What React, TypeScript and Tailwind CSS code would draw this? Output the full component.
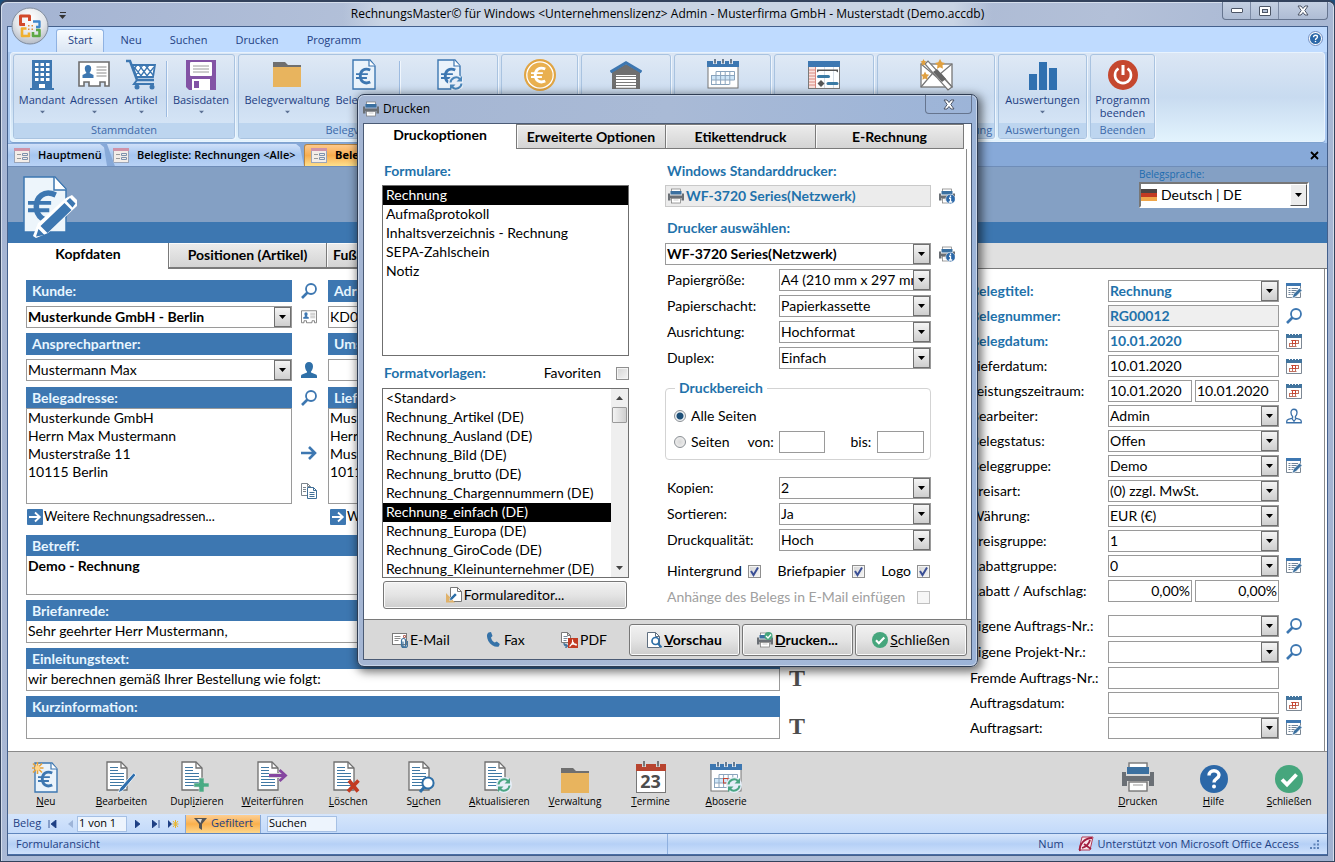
import React, { useId } from "react";

const SEGOE = "font-['Open_Sans','Noto_Sans',sans-serif]";
const BLUE = "#3d77b1";

type IconProps = { className?: string };

/* ---------- icon building blocks ---------- */

function Svg({ w, h, vb, children }: { w: number; h: number; vb?: string; children: React.ReactNode }) {
  return (
    <svg width={w} height={h} viewBox={vb ?? `0 0 ${w} ${h}`} fill="none" className="block shrink-0" aria-hidden="true">
      {children}
    </svg>
  );
}

function EuroSign({ x, y, s, color, sw }: { x: number; y: number; s: number; color: string; sw: number }) {
  return (
    <g transform={`translate(${x} ${y}) scale(${s})`} stroke={color} strokeWidth={sw}>
      <path d="M15 3.2C8.5.2 4.5 4.5 4.5 9.5s4 9.3 10.500 6.300" />
      <path d="M0 7.500h12.500M0 11.500h11.500" strokeWidth={sw * 0.7} />
    </g>
  );
}

function RefreshArrows({ x, y, color }: { x: number; y: number; color: string }) {
  return (
    <g transform={`translate(${x} ${y})`}>
      <circle cx="7" cy="7" r="8" fill="#e6eef8" />
      <path d="M1.500 6.500A5.600 5.600 0 0 1 11 3M12.500 7.500A5.600 5.600 0 0 1 3 11" stroke={color} strokeWidth="2" />
      <path d="M13 0v5.500H7.500zM1 14V8.500h5.500z" fill={color} />
    </g>
  );
}

const BuildingIcon = () => (
  <Svg w={24} h={30}>
    <path d="M2 0h20v28h2v2H0v-2h2z" fill={BLUE} />
    {[3, 8, 13, 18].map((y) => [5, 10.5, 16].map((x) => <rect key={`${x}-${y}`} x={x} y={y} width="3.500" height="3" fill="#fff" />))}
    <rect x="9" y="24" width="6" height="4" fill="#fff" />
  </Svg>
);

const IdCardIcon = ({ small }: { small?: boolean }) => (
  <Svg w={small ? 16 : 32} h={small ? 14 : 27} vb="0 0 32 27">
    <path d="M1 1h30v24h-4v-4h-5v4H11v-4H6v4H1z" fill="#fff" stroke="#6d6d6d" strokeWidth="1.600" />
    <path d="M10 4c2 0 3.200 1.500 3.200 3.500S12 11.500 11.500 12l4 2v3h-11v-3l4-2C8 11.500 6.800 9.500 6.800 7.500S8 4 10 4z" fill={BLUE} />
    <path d="M18.500 6h10M18.500 9h10M18.500 12h10M18.500 15h10" stroke="#8a8a8a" />
  </Svg>
);

const CartIcon = () => (
  <Svg w={32} h={31}>
    <path d="M1 2h4l7 19h17" stroke={BLUE} strokeWidth="2.500" />
    <path d="M7.500 6H30l-2 12H11.500z" stroke={BLUE} strokeWidth="1.800" fill="#fff" />
    <path d="M9 8l8 10M14 6l9 12M20 6l8 10M29 8l-8 10M24 6l-9 12M18 6l-7 10M12 6l-3 4" stroke={BLUE} strokeWidth="1.300" />
    <path d="M12 21l-3 4h20" stroke={BLUE} strokeWidth="2" />
    <circle cx="12" cy="28" r="2.500" fill={BLUE} />
    <circle cx="27" cy="28" r="2.500" fill={BLUE} />
  </Svg>
);

const FloppyIcon = () => (
  <Svg w={30} h={30}>
    <path d="M0 0h30v30H3l-3-3z" fill="#8353a5" />
    <rect x="4" y="2" width="22" height="14" rx="1" fill="#fff" />
    <path d="M7 6h16M7 9h16M7 12h16" stroke="#9a9a9a" />
    <path d="M6 19h18v11H6z" fill="#fff" />
    <rect x="8" y="21" width="5" height="7" fill="#8353a5" />
  </Svg>
);

const FolderIcon = () => (
  <Svg w={28} h={25}>
    <path d="M0 0h12l3 3h13v3H0z" fill="#6f6f6f" />
    <rect y="5" width="28" height="20" fill="#e8b45e" />
  </Svg>
);

const EuroDocIcon = ({ refresh, star }: { refresh?: boolean; star?: boolean }) => (
  <Svg w={28} h={31}>
    <path d="M3 1h17l5 6v23H3z" fill="#eaf3fb" stroke={BLUE} strokeWidth="1.400" />
    <path d="M19 1v6h6" stroke={BLUE} strokeWidth="1.200" fill="#fff" />
    <EuroSign x={6} y={8} s={0.95} color={BLUE} sw={3} />
    {refresh && <RefreshArrows x={14} y={17} color="#4a86ba" />}
    {star && (
      <g stroke="#e8a33a" strokeWidth="1.600">
        <path d="M5.500 0v12M-.5 6h12M1 1.500l9 9M10 1.500l-9 9" />
        <circle cx="5.500" cy="6" r="2.500" fill="#ffd58a" stroke="none" />
      </g>
    )}
  </Svg>
);

const CoinIcon = () => (
  <Svg w={32} h={32}>
    <circle cx="16" cy="16" r="16" fill="#e0a443" />
    <circle cx="16" cy="16" r="13.200" fill="#e9b050" stroke="#fff" strokeWidth="1.300" />
    <EuroSign x={7} y={7} s={0.95} color="#fff" sw={3} />
  </Svg>
);

const GarageIcon = () => (
  <Svg w={32} h={28}>
    <path d="M2 11L16 3l14 8v17h-4V14H6v14H2z" fill="#6f6f6f" />
    <path d="M3 12l13-8 13 8-3 3H6z" fill="#6f6f6f" />
    <path d="M.5 11L16 1.800 31.500 11" stroke={BLUE} strokeWidth="3" />
    <rect x="6" y="14" width="20" height="14" fill="#fff" />
    <path d="M6 15.500h20M6 18.500h20M6 21.500h20M6 24.500h20M6 27.300h20" stroke="#7b7b7b" strokeWidth="1.200" />
  </Svg>
);

const CalendarIcon = ({ refresh }: { refresh?: boolean }) => (
  <Svg w={32} h={31}>
    <rect x="1" y="3" width="30" height="26" fill="#fff" stroke="#777" />
    <rect x="0" y="2" width="32" height="6" fill={BLUE} />
    <path d="M8 0v5M16 0v5M24 0v5" stroke="#dfe8f4" strokeWidth="4" />
    <path d="M8 0v4.500M16 0v4.500M24 0v4.500" stroke="#5d6f82" strokeWidth="1.800" />
    <rect x="4.500" y="17" width="23" height="4" fill="#cfe6f8" />
    <path d="M9 12.500h18.500M4 16.500h23.500M4 21h23.500M4 25.500h18.500M4.500 16.500v9M9 12.500v13M13.600 12.500v13M18.200 12.500v13M22.800 12.500v13M27.500 12.500v8.500" stroke="#8aa4bd" />
    {refresh && <rect x="13.500" y="16.500" width="4.500" height="4.500" stroke="#c8432f" />}
    {refresh && <RefreshArrows x={17} y={16} color="#4aa583" />}
  </Svg>
);

const GanttIcon = () => (
  <Svg w={32} h={28}>
    <rect x=".5" y=".5" width="31" height="27" fill="#fff" stroke="#7b7b7b" />
    <rect width="32" height="6" fill={BLUE} />
    <rect x="1" y="6" width="6" height="21" fill="#fbe3df" />
    <path d="M1 9h6M1 12h6M1 15h6M1 18h6M1 21h6M1 24h6M7.500 6v21" stroke="#d98a80" />
    <path d="M16.500 6v21M25.500 6v21" stroke="#d5dde6" />
    <path d="M9 8.500h21v3l-2-1.500H11l-2 1.500z" fill="#555" />
    <path d="M10.500 15.500h10" stroke="#3b7ba5" strokeWidth="3" strokeLinecap="round" />
    <path d="M20 22.500h9" stroke="#3b7ba5" strokeWidth="3" strokeLinecap="round" />
    <path d="M13 19l3.500 3.500L13 26l-3.500-3.500z" fill="#555" />
  </Svg>
);

const WandIcon = () => (
  <Svg w={33} h={32}>
    <rect x="1" y="5" width="31" height="23" fill="#fff" stroke="#777" strokeWidth="1.300" />
    <path d="M1 5l15.500 13L32 5M1 28l11-13M32 28L21 15" stroke="#777" strokeWidth="1.200" />
    <path d="M5 5l3-3 24 26-4 3z" fill="#fff" stroke="#777" strokeWidth="1.200" />
    <path d="M13 13l4-3 9 10-4 3z" fill="#666" />
    <g fill="#e0a040">
      <path d="M20 0l1.800 3.200 3.200.8-2.500 2.300.4 3.400L20 8.300l-3 1.400.5-3.400L15 4l3.300-.8z" />
      <path d="M5 12.500l1.400 2.700 2.800.6-2 2 .3 2.900L5 19.500l-2.600 1.200.4-2.900-2-2 2.900-.6z" />
      <path d="M3.500 0l1 2 2 .5-1.500 1.500.3 2.500-1.800-1-2 1 .4-2.500L.5 2.500l2-.5z" />
    </g>
  </Svg>
);

const BarsIcon = () => (
  <Svg w={28} h={30}>
    <path d="M0 14h8v16H0zM10 2h8v28h-8zM20 8h8v22h-8z" fill="#2f70b0" />
  </Svg>
);

const PowerIcon = () => (
  <Svg w={30} h={30}>
    <circle cx="15" cy="15" r="15" fill="#c5482f" />
    <path d="M10.500 8.500a8 8 0 1 0 9 0" stroke="#fff" strokeWidth="2.600" />
    <path d="M15 5v10" stroke="#fff" strokeWidth="3" />
  </Svg>
);

const FormIcon = () => (
  <Svg w={16} h={15}>
    <rect x=".5" y=".5" width="15" height="14" fill="#f3ede8" stroke="#9aa5b8" />
    <rect x="0" y="0" width="16" height="3" fill="#cf93a8" />
    <path d="M3 6.500h4M3 10.500h4" stroke="#9a9a9a" />
    <path d="M8.500 5.500h5v2h-5zM8.500 9.500h5v2h-5z" stroke="#7d92ad" />
  </Svg>
);

const EuroPencilIcon = () => (
  <Svg w={54} h={62}>
    <path d="M1 1h31l11 12v43H1z" fill="#edf5fb" stroke={BLUE} strokeWidth="1.500" />
    <path d="M31 1v13h12" fill="#fff" stroke={BLUE} strokeWidth="1.500" />
    <EuroSign x={5} y={13} s={1.85} color={BLUE} sw={3} />
    <path d="M43 22l6-3 5 5v6L25 57l-12 5-3-2 5-13z" fill="#fff" />
    <path d="M41.500 27l7 7-24 23-7-7zM43.500 25l3.500-3 5.500 5.500-3 4zM15.500 53l6 6-8.500 1.500z" fill={BLUE} />
  </Svg>
);

const SearchIcon = () => (
  <Svg w={16} h={16}>
    <circle cx="10" cy="6" r="5" stroke={BLUE} strokeWidth="1.800" />
    <path d="M6.500 9.500L1 15" stroke={BLUE} strokeWidth="2.600" />
  </Svg>
);

const UserIcon = () => (
  <Svg w={16} h={16}>
    <path d="M8 0c2.500 0 4 1.800 4 4.200S10.800 8.500 10 9.500v1l5 2c.7.300 1 1 1 1.700V16H0v-1.800c0-.7.300-1.400 1-1.700l5-2v-1C5.200 8.500 4 6.600 4 4.200S5.500 0 8 0z" fill="#2f70a8" />
  </Svg>
);

const UserLineIcon = () => (
  <Svg w={16} h={16} vb="0 0 17 16">
    <path d="M8.500.8c2 0 3.200 1.500 3.200 3.400 0 2-1 3.600-1.700 4.300v1.700l4.500 1.300c1 .3 1.700 1 1.700 2v1.700H.8v-1.700c0-1 .7-1.700 1.700-2L7 10.200V8.500c-.7-.7-1.700-2.300-1.700-4.300C5.300 2.300 6.500.8 8.500.8z" stroke="#3a70a8" strokeWidth="1.400" fill="#fff" />
    <path d="M6 10.500l2.500 3 2.500-3M8.500 13v2.500" stroke="#3a70a8" strokeWidth="1.200" />
  </Svg>
);

const ArrowIcon = () => (
  <Svg w={16} h={16}>
    <path d="M0 8h14M8 2l6 6-6 6" stroke={BLUE} strokeWidth="2.600" />
  </Svg>
);

const CopyIcon = () => (
  <Svg w={16} h={16}>
    <path d="M.5.5h6l3 3v9h-9zM6.500.5v3h3" fill="#fff" stroke="#7d858d" />
    <path d="M2 4.500h3M2 6.500h3M2 8.500h3" stroke="#7d858d" />
    <path d="M6.500 4.500h6l3 3v8h-9zM12.500 4.500v3h3" fill="#fff" stroke="#3f6f98" />
    <path d="M8.500 9.500h5M8.500 11.500h5M8.500 13.500h5" stroke="#3f6f98" />
  </Svg>
);

const ArrowBoxIcon = () => (
  <Svg w={16} h={16}>
    <rect width="16" height="16" rx="1" fill={BLUE} />
    <path d="M2 8h11M8 3.500L12.800 8 8 12.500" stroke="#fff" strokeWidth="1.800" />
  </Svg>
);

const ListEditIcon = () => (
  <Svg w={16} h={16}>
    <path d="M.5.500h14v14H.5z" fill="#fff" stroke="#7a8794" />
    <rect width="15" height="3" fill={BLUE} />
    <path d="M2.500 5.500h2M2.500 7.500h2M2.500 9.500h2M2.500 11.500h2M5.500 5.500H12M5.500 7.500H11M5.500 9.500H9M5.500 11.500H8" stroke="#6d8298" />
    <path d="M13.500 5L16 7.500l-6 6-4 2 1.500-4.500z" fill="#3a70a0" stroke="#fff" strokeWidth=".7" />
  </Svg>
);

const CalSmallIcon = () => (
  <Svg w={16} h={16}>
    <path d="M.5 3v12.500h15V3" fill="#fff" stroke="#7d8894" />
    <rect y="1" width="16" height="4" fill="#41749e" />
    <path d="M3.500 0v2M6.500 0v2M9.500 0v2M12.500 0v2" stroke="#fff" />
    <path d="M5 7.500h8M3 10.500h10M3 13.500h7.500M3.500 10.500v3M6.500 7.500v6M9.500 7.500v6M12.500 7.500v3" stroke="#c0705f" />
    <rect x="6.500" y="7.500" width="3" height="3" stroke="#c8432f" />
  </Svg>
);

const DocBase = () => (
  <>
    <path d="M1 1h14l6 6v22H1z" fill="#fff" stroke="#6f6f6f" strokeWidth="1.300" />
    <path d="M15 1v6h6" stroke="#6f6f6f" strokeWidth="1.300" />
    <path d="M4 6.500h8M4 9.500h8M4 12.500h14M4 15.500h14M4 18.500h14M4 21.500h14M4 24.500h14" stroke="#3f78a4" strokeWidth="1.200" />
  </>
);

const DocIcon = ({ kind }: { kind: string }) => (
  <Svg w={31} h={32}>
    <DocBase />
    {kind === "edit" && <path d="M27.500 12l2.500 2-13 15.500-5 2.500 2-5z" fill="#2f6fae" stroke="#fff" strokeWidth=".8" />}
    {kind === "add" && <path d="M18 17h5v5h5v4h-5v5h-5v-5h-5v-4h5z" fill="#4aab84" stroke="#d8d8d8" strokeWidth=".6" />}
    {kind === "next" && <path d="M12 14.500h17M23 8.500l6 6-6 6" stroke="#d8d8d8" strokeWidth="5" />}
    {kind === "next" && <path d="M12 14.500h16M22.500 9l6 5.500-6 5.500" stroke="#8546a0" strokeWidth="2.800" />}
    {kind === "delete" && <path d="M16 19.500l9 11M25.500 19.500L15 30.500" stroke="#c23b22" strokeWidth="3.600" />}
    {kind === "find" && (
      <g>
        <circle cx="20" cy="22" r="5.600" fill="#fff" stroke="#2f70a8" strokeWidth="2" />
        <path d="M16 26.500L12 31" stroke="#2f70a8" strokeWidth="3" />
      </g>
    )}
    {kind === "refresh" && <RefreshArrows x={13} y={17} color="#4aa583" />}
  </Svg>
);

const TermineIcon = () => (
  <span className="relative block">
    <Svg w={30} h={32}>
      <rect x=".5" y="3.500" width="29" height="28" fill="#fff" stroke="#777" />
      <rect y="3" width="30" height="7" fill="#b8442f" />
      <path d="M8 0v6M22 0v6" stroke="#d8d8d8" strokeWidth="4" />
      <path d="M8 0v5.500M22 0v5.500" stroke="#777" strokeWidth="2" />
    </Svg>
    <span className="absolute inset-x-0 top-[9px] text-center text-[18px] leading-[22px] font-bold text-[#4d4d4d]">23</span>
  </span>
);

const PrinterIcon = ({ w = 16, badge }: { w?: number; badge?: "info" | "check" }) => (
  <Svg w={w} h={w} vb="0 0 32 32">
    <rect x="7" y="2" width="18" height="9" fill="#fff" stroke="#777" strokeWidth="1.400" />
    <rect x="5" y="6" width="22" height="7" fill="#3b70a0" />
    <path d="M0 11h4v4h24v-4h4v14h-5v-5H5v5H0z" fill="#6a6f75" />
    <rect x="7" y="21" width="18" height="9" fill="#fff" stroke="#777" strokeWidth="1.400" />
    <path d="M11 24h10" stroke="#999" />
    {badge === "info" && (
      <g>
        <circle cx="23" cy="22" r="9.500" fill="#2c68a8" stroke="#fff" />
        <path d="M23 15v3M20 20.500h3V28M19.500 28h7" stroke="#fff" strokeWidth="2.600" />
      </g>
    )}
    {badge === "check" && (
      <g>
        <circle cx="23" cy="8" r="8" fill="#46a67d" />
        <path d="M18 8l4 4 6-7" stroke="#fff" strokeWidth="2.600" />
      </g>
    )}
  </Svg>
);

const HelpIcon = ({ w }: { w: number }) => (
  <Svg w={w} h={w} vb="0 0 28 28">
    <circle cx="14" cy="14" r="14" fill="#2c68a8" />
    <path d="M9 10.500c0-3 2.200-4.700 5-4.700s5 1.700 5 4.200c0 3.700-5 3.700-5 7.500" stroke="#fff" strokeWidth="3.400" />
    <circle cx="14" cy="21.500" r="2" fill="#fff" />
  </Svg>
);

const CheckIcon = ({ w }: { w: number }) => (
  <Svg w={w} h={w} vb="0 0 28 28">
    <circle cx="14" cy="14" r="14" fill="#46a67d" />
    <path d="M7 14.500l5 5 9.500-10" stroke="#fff" strokeWidth="3.800" />
  </Svg>
);

const MailIcon = () => (
  <Svg w={16} h={16}>
    <rect x=".5" y="1.500" width="14" height="11" fill="#fff" stroke="#7a7a7a" />
    <path d="M2.500 4.500h6M2.500 6.500h6M2.500 8.500h4" stroke="#8a8a8a" />
    <path d="M11.500 3.500h2v2h-2z" stroke="#b86a60" />
    <path d="M9.500 14V8.500a2 2 0 0 1 4 0V14a1.300 1.300 0 0 1-2.500 0V9.500M9.500 13a3 3 0 0 0 6 0V9" stroke="#41749e" strokeWidth="1.200" />
  </Svg>
);

const PhoneIcon = () => (
  <Svg w={14} h={15}>
    <path d="M2.500.5L5 0l1.500 4L5 5.500C5.500 8 7 9.800 8.800 10.500l2-1 3 2.500-1 2.500c-3 1.200-8-1-10.500-5.500C.5 5.500.5 2 2.500.5z" fill="#3572a8" />
  </Svg>
);

const PdfIcon = () => (
  <Svg w={17} h={16}>
    <path d="M.5.500h6l3 3v7h-9zM6.500.5v3h3" fill="#fff" stroke="#7a7a7a" />
    <path d="M2.500 4.500h4M2.500 6.500h4M2.500 8.500h3" stroke="#7a8a9a" />
    <path d="M3 11c0 2.500 1 3 3 3M4.500 12L6.500 14l-2 2" stroke="#41749e" strokeWidth="1.300" />
    <rect x="7" y="6" width="10" height="10" fill="#c23b22" />
    <path d="M8.500 14.500c2-1.500 3.500-4.500 3-7M12 10c.5 2 2 3 4 3M9.500 13c1.500-1 4-1.500 6-.500" stroke="#fff" strokeWidth="1.100" />
  </Svg>
);

const PreviewIcon = () => (
  <Svg w={15} h={16}>
    <path d="M.5.500h8l4 4v11H.5z" fill="#fff" stroke="#5f6f80" />
    <path d="M8.500.5v4h4" stroke="#5f6f80" />
    <circle cx="8.500" cy="9" r="3.500" fill="#fff" stroke="#2f70a8" strokeWidth="1.700" />
    <path d="M11 11.500l3.500 4" stroke="#2f70a8" strokeWidth="2" />
  </Svg>
);

const FormEditIcon = () => (
  <Svg w={16} h={16}>
    <path d="M4.500.5h7l4 4v10h-11z" fill="#fff" stroke="#777" />
    <path d="M11.500.5v4h4" stroke="#777" />
    <path d="M0 6l9 9.500H0z" fill="#e0b26a" />
    <path d="M9 6l2 2-5 5-2.500.5L4 11z" fill="#2f70a8" stroke="#fff" strokeWidth=".5" />
  </Svg>
);

const OfficeOrb = () => (
  <Svg w={38} h={38}>
    <defs>
      <radialGradient id="orb" cx="50%" cy="30%" r="70%">
        <stop offset="0" stopColor="#ffffff" />
        <stop offset=".6" stopColor="#e3e6ea" />
        <stop offset="1" stopColor="#b5bcc6" />
      </radialGradient>
    </defs>
    <circle cx="19" cy="19" r="18" fill="url(#orb)" stroke="#7f8c9e" />
    <path d="M14 17.500H9.500V9h9v5" stroke="#d2492a" strokeWidth="3" strokeLinejoin="round" />
    <path d="M22 14.500h6.500V20H25" stroke="#3f87cc" strokeWidth="2.300" strokeLinejoin="round" />
    <path d="M15.500 21.500H11V29h7v-3.500" stroke="#f0b02f" strokeWidth="2.600" strokeLinejoin="round" />
    <path d="M22 25v4h6.500v-6H25" stroke="#5da845" strokeWidth="2.600" strokeLinejoin="round" />
    <path d="M17 18h1.500v1.500H17zM20.500 18H22v1.500h-1.500zM17 21.500h1.500V23H17zM20.500 21.500H22V23h-1.500z" fill="#e08a3a" />
  </Svg>
);

const AccessIcon = () => (
  <Svg w={16} h={16}>
    <path d="M4 1h11l-3 13H1z" fill="#f7e6ea" stroke="#b23a55" />
    <path d="M2 15C1 9 6 2 14 2M4 12c3-1 7-4 8-8M6 8l7 5" stroke="#a31f40" strokeWidth="1.800" />
  </Svg>
);

const Flag = () => (
  <Svg w={16} h={12}>
    <rect width="16" height="4" fill="#4a4444" />
    <rect y="4" width="16" height="4" fill="#c23a22" />
    <rect y="8" width="16" height="4" fill="#f0a64a" />
  </Svg>
);

const Caret = ({ className = "" }: IconProps) => (
  <svg width="7" height="4" viewBox="0 0 7 4" className={`block ${className}`} aria-hidden="true">
    <path d="M0 0h7L3.500 4z" fill="currentColor" />
  </svg>
);

const CloseGlyph = () => (
  <Svg w={14} h={11}>
    <path d="M2 1h3l2 2.500L9 1h3L8.800 5.500 12 10H9L7 7.500 5 10H2l3.200-4.500z" fill="#fff" stroke="#4c5566" />
  </Svg>
);

/* ---------- form controls ---------- */

function Combo({ label, value, bold, blue, options }: { label: string; value: string; bold?: boolean; blue?: boolean; options?: string[] }) {
  return (
    <span className="relative block min-w-0 flex-1">
      <select
        aria-label={label}
        defaultValue={value}
        className={`block h-[22px] w-full appearance-none overflow-hidden border border-[#9a9a9a] bg-white pr-[17px] pl-px text-sm leading-5 ${
          bold ? "font-bold" : ""
        } ${blue ? "text-[#1f72ab]" : "text-black"}`}
      >
        {(options ?? [value]).map((o) => (
          <option key={o}>{o}</option>
        ))}
      </select>
      <span className="pointer-events-none absolute top-px right-px flex h-5 w-[17px] items-center justify-center border border-[#707070] bg-gradient-to-b from-[#f4f4f4] to-[#cfcfcf] text-black">
        <Caret />
      </span>
    </span>
  );
}

function Field({ label, value, className = "" }: { label: string; value?: string; className?: string }) {
  return (
    <input
      aria-label={label}
      defaultValue={value}
      className={`block h-[22px] w-full min-w-0 flex-1 border border-[#9a9a9a] px-px pb-0.5 text-sm leading-5 ${className}`}
    />
  );
}

function Heading({ children, className = "h-[22px]" }: { children: React.ReactNode; className?: string }) {
  return <h3 className={`flex items-center bg-[#3d77b1] px-1.5 text-sm font-bold text-[#e8f6ff] ${className}`}>{children}</h3>;
}

function IconButton({ label, children }: { label: string; children: React.ReactNode }) {
  return (
    <button type="button" aria-label={label} className="flex h-[22px] w-4 shrink-0 items-center justify-center">
      {children}
    </button>
  );
}

function AccessKey({ text, at }: { text: string; at: number }) {
  return (
    <span className="whitespace-nowrap">
      {text.slice(0, at)}
      <u className="underline">{text[at]}</u>
      {text.slice(at + 1)}
    </span>
  );
}

/* ---------- ribbon ---------- */

function RibbonButton({ icon, label, w, arrow = true }: { icon: React.ReactNode; label?: string; w: string; arrow?: boolean }) {
  return (
    <button type="button" aria-label={label ?? "Menü"} className={`flex shrink-0 flex-col items-center ${w}`}>
      <span className="flex h-[31px] items-center justify-center">{icon}</span>
      {label && <span className="mt-[3px] text-center text-[11px] leading-[13px] whitespace-pre text-[#1e3f83]">{label}</span>}
      {arrow && label && <Caret className="mt-1 scale-75 text-[#5c7194]" />}
    </button>
  );
}

function RibbonGroup({ title, w, children, align = "justify-center" }: { title?: string; w: string; children: React.ReactNode; align?: string }) {
  return (
    <section className={`flex h-[85px] shrink-0 flex-col overflow-hidden rounded-[3px] border border-[#a9c3e0] bg-gradient-to-b from-[#dfe9f5] via-[#cbdcf0] to-[#d9e8f8] shadow-[1px_1px_0_#eef5fd] ${w}`}>
      <div className={`flex flex-1 px-0.5 pt-1 ${align}`}>{children}</div>
      <h2 className="h-[15px] bg-[#bdd5ef] text-center text-[11px] leading-[14px] whitespace-nowrap text-[#3e6aaa]">{title}</h2>
    </section>
  );
}

const Separator = () => <span className="mx-1 mt-0.5 h-14 w-px shrink-0 bg-[#9dbbe0] shadow-[1px_0_0_#f0f6fd]" />;

function Ribbon() {
  return (
    <div className="mx-0.5 flex h-[90px] gap-[3px] rounded-[3px] border border-[#e8f3fe] bg-gradient-to-b from-[#dbe6f4] via-[#c8dbf0] to-[#e2f3fd] px-0.5 py-px shadow-[0_1px_0_#7fa3cf]">
      <RibbonGroup title="Stammdaten" w="w-[222px]" align="justify-start">
        <RibbonButton icon={<BuildingIcon />} label="Mandant" w="w-[52px]" />
        <RibbonButton icon={<IdCardIcon />} label="Adressen" w="w-[52px]" />
        <RibbonButton icon={<CartIcon />} label="Artikel" w="w-[42px]" />
        <Separator />
        <RibbonButton icon={<FloppyIcon />} label="Basisdaten" w="w-[60px]" />
      </RibbonGroup>
      <RibbonGroup title="Belegverwaltung" w="w-[260px]" align="justify-start">
        <RibbonButton icon={<FolderIcon />} label="Belegverwaltung" w="w-[92px]" />
        <RibbonButton icon={<EuroDocIcon />} label="Belegdruck" w="w-[62px]" />
        <Separator />
        <RibbonButton icon={<EuroDocIcon refresh />} w="w-[90px]" />
      </RibbonGroup>
      <RibbonGroup w="w-[77px]">
        <RibbonButton icon={<CoinIcon />} w="w-16" />
      </RibbonGroup>
      <RibbonGroup w="w-[90px]">
        <RibbonButton icon={<GarageIcon />} w="w-16" />
      </RibbonGroup>
      <RibbonGroup w="w-[97px]">
        <RibbonButton icon={<CalendarIcon />} w="w-16" />
      </RibbonGroup>
      <RibbonGroup w="w-[100px]">
        <RibbonButton icon={<GanttIcon />} w="w-16" />
      </RibbonGroup>
      <RibbonGroup title="Newsletterverwaltung" w="w-[118px]">
        <RibbonButton icon={<WandIcon />} w="w-16" />
      </RibbonGroup>
      <RibbonGroup title="Auswertungen" w="w-[89px]">
        <RibbonButton icon={<BarsIcon />} label="Auswertungen" w="w-[82px]" />
      </RibbonGroup>
      <RibbonGroup title="Beenden" w="w-[65px]">
        <RibbonButton icon={<PowerIcon />} label={"Programm\nbeenden"} w="w-[60px]" arrow={false} />
      </RibbonGroup>
    </div>
  );
}

/* ---------- window chrome ---------- */

function TitleBar() {
  return (
    <header className="flex h-6 items-start text-black">
      <div className="flex flex-1">
        <button type="button" aria-label="Schnellzugriff anpassen" className="mt-2.5 ml-[52px] flex flex-col items-center gap-0.5">
          <span className="h-px w-1.5 bg-[#333]" />
          <Caret className="text-[#333]" />
        </button>
      </div>
      <h1 className="bg-[linear-gradient(to_right,transparent,#c9d4e4_6%,#c9d4e4_94%,transparent)] px-2 text-xs leading-6 whitespace-nowrap">
        RechnungsMaster© für Windows &lt;Unternehmenslizenz&gt; Admin - Musterfirma GmbH - Musterstadt (Demo.accdb)
      </h1>
      <div className="flex flex-1 justify-end">
        <div className="flex h-[18px] divide-x divide-[#7d8ba5] rounded-b-[4px] border border-t-0 border-[#66758f] bg-gradient-to-b from-[#c5d0e2] to-[#aebcd4]">
          <button type="button" aria-label="Minimieren" className="flex w-7 items-center justify-center">
            <span className="h-[5px] w-3 rounded-[1px] border border-[#4c5566] bg-white" />
          </button>
          <button type="button" aria-label="Maximieren" className="flex w-7 items-center justify-center">
            <span className="h-2.5 w-3 rounded-[1px] border border-[#4c5566] bg-white p-0.5">
              <span className="block h-full border border-[#4c5566] bg-[#b5c2d8]" />
            </span>
          </button>
          <button type="button" aria-label="Fenster schließen" className="flex w-12 items-center justify-center">
            <CloseGlyph />
          </button>
        </div>
      </div>
    </header>
  );
}

function MenuBar() {
  return (
    <nav className="flex h-[25px] items-end bg-[#bfdbff] pl-12 text-[11px] text-[#1e3f83]">
      {["Start", "Neu", "Suchen", "Drucken", "Programm"].map((m, i) => (
        <button
          key={m}
          type="button"
          className={
            i === 0
              ? "mr-0.5 h-[23px] rounded-t-[3px] border border-b-0 border-[#8fb2e2] bg-gradient-to-b from-[#f7fbff] to-[#dbe6f4] px-[11px] pb-px"
              : "h-[23px] px-[14px]"
          }
        >
          {m}
        </button>
      ))}
      <button type="button" aria-label="Hilfe" className="mr-1 mb-1.5 ml-auto rounded-full border border-[#6f8cc0] bg-white p-px">
        <HelpIcon w={11} />
      </button>
    </nav>
  );
}

function DocumentTabs() {
  return (
    <nav className="flex h-6 items-end border-b border-[#6f8db8] bg-[#87a9d8] text-[11px] text-black">
      <button type="button" className="flex h-[22px] w-[99px] items-center gap-2 bg-gradient-to-b from-[#cfe0f8] via-[#a6c6f0] to-[#b8d2f5] pl-1.5 font-semibold [clip-path:polygon(0_0,93%_0,97%_15%,100%_100%,0_100%)]">
        <FormIcon />
        Hauptmenü
      </button>
      <button type="button" className="flex h-[22px] w-[197px] items-center gap-2 bg-gradient-to-b from-[#cfe0f8] via-[#a6c6f0] to-[#b8d2f5] pl-1.5 font-semibold whitespace-nowrap [clip-path:polygon(0_0,96%_0,98%_15%,100%_100%,4%_100%)]">
        <FormIcon />
        Belegliste: Rechnungen &lt;Alle&gt;
      </button>
      <button type="button" className="flex h-[22px] w-[150px] items-center gap-2 rounded-t-[3px] border border-b-0 border-[#b98540] bg-gradient-to-b from-[#fdc98a] via-[#f7ad4f] to-[#fde08c] pl-1.5 font-bold">
        <FormIcon />
        Beleg
      </button>
      <button type="button" aria-label="Register schließen" className="mr-2 mb-1.5 ml-auto">
        <Svg w={9} h={9}>
          <path d="M1 1l7 7M8 1L1 8" stroke="#000" strokeWidth="1.800" />
        </Svg>
      </button>
    </nav>
  );
}

function RecordHeader() {
  const id = useId();
  return (
    <div className="flex h-[76px] items-start justify-between bg-[linear-gradient(to_bottom,#84a0c4_55px,#3d77b1_55px)] pr-[18px] pl-[15px]">
      <div className="pt-[9px]">
        <EuroPencilIcon />
      </div>
      <div>
        <label htmlFor={id} className={`block text-[10px] leading-[15px] text-[#1c6cb0] ${SEGOE}`}>
          Belegsprache:
        </label>
        <div className="relative flex h-[26px] w-[170px] items-center border-2 border-white border-t-[#777] border-l-[#777] bg-white">
          <span className="absolute left-0">
            <Flag />
          </span>
          <select id={id} className="h-full w-full appearance-none bg-transparent pl-5 text-sm">
            <option>Deutsch | DE</option>
          </select>
          <span className="pointer-events-none absolute top-0 right-0 flex h-[22px] w-[17px] items-center justify-center border border-white border-r-[#555] border-b-[#555] bg-[#ececec]">
            <Caret />
          </span>
        </div>
      </div>
    </div>
  );
}

const inactiveTab = "border-r border-b border-[#7a7a7a] bg-gradient-to-b from-[#ececec] to-[#d4d4d4] font-bold shadow-[inset_1px_1px_0_#fafafa]";

function FormTabs() {
  return (
    <div role="tablist" className="flex h-[26px] border-b border-[#7a7a7a] bg-[#e0e0e0] text-sm">
      <button type="button" role="tab" aria-selected="true" className="-mb-px h-[26px] w-[161px] border-r border-[#7a7a7a] bg-white pb-1 font-bold">
        Kopfdaten
      </button>
      <button type="button" role="tab" aria-selected="false" className={`h-[25px] w-[158px] ${inactiveTab}`}>
        Positionen (Artikel)
      </button>
      <button type="button" role="tab" aria-selected="false" className={`h-[25px] w-[158px] ${inactiveTab} pl-[6px] text-left`}>
        Fußdaten
      </button>
    </div>
  );
}

/* ---------- invoice form ---------- */

const address = "Musterkunde GmbH\nHerrn Max Mustermann\nMusterstraße 11\n10115 Berlin";

function TextBlock({ title, value, h, bold }: { title: string; value?: string; h: string; bold?: boolean }) {
  return (
    <div className="flex items-end gap-[9px]">
      <div className="min-w-0 flex-1">
        <Heading className="h-[21px]">{title}</Heading>
        <textarea
          aria-label={title}
          defaultValue={value}
          className={`block w-full resize-none overflow-hidden border border-t-0 border-[#9a9a9a] bg-white px-px text-sm leading-5 ${h} ${bold ? "font-bold" : ""}`}
        />
      </div>
      <button type="button" aria-label="Textbaustein" className="h-[26px] w-[15px] font-['Liberation_Serif',serif] text-2xl leading-[26px] font-bold text-[#4d4d4d]">
        T
      </button>
    </div>
  );
}

function LeftForm() {
  return (
    <div className="min-w-0 flex-1 pt-[11px]">
      <div className="grid grid-cols-[266px_18px_266px] gap-x-[9px]">
        <Heading>Kunde:</Heading>
        <IconButton label="Kunde suchen"><SearchIcon /></IconButton>
        <Heading>Adressnummer:</Heading>
        <div className="mt-1 mb-[5px] flex"><Combo label="Kunde" value="Musterkunde GmbH - Berlin" bold /></div>
        <div className="mt-1"><IconButton label="Adresse öffnen"><IdCardIcon small /></IconButton></div>
        <div className="mt-1 flex"><Field label="Adressnummer" value="KD00001" /></div>
        <Heading>Ansprechpartner:</Heading>
        <span />
        <Heading>Umsatzsteuer-ID:</Heading>
        <div className="mt-1 mb-1.5 flex"><Combo label="Ansprechpartner" value="Mustermann Max" /></div>
        <div className="mt-1"><IconButton label="Ansprechpartner öffnen"><UserIcon /></IconButton></div>
        <div className="mt-1 flex"><Field label="Umsatzsteuer-ID" /></div>
        <Heading className="h-[21px]">Belegadresse:</Heading>
        <IconButton label="Adresse suchen"><SearchIcon /></IconButton>
        <Heading className="h-[21px]">Lieferadresse:</Heading>
        <textarea aria-label="Belegadresse" defaultValue={address} className="-mt-px h-24 resize-none border border-[#9a9a9a] px-px text-sm leading-[18px]" />
        <div className="flex flex-col justify-end pb-0.5">
          <IconButton label="Adresse übernehmen"><ArrowIcon /></IconButton>
          <span className="h-4" />
          <IconButton label="Adresse kopieren"><CopyIcon /></IconButton>
        </div>
        <textarea aria-label="Lieferadresse" defaultValue={address} className="-mt-px h-24 resize-none border border-[#9a9a9a] px-px text-sm leading-[18px]" />
        <a href="#rechnungsadressen" className="mt-[5px] mb-2.5 flex h-4 items-center gap-px pl-px text-[13px]"><ArrowBoxIcon />Weitere Rechnungsadressen...</a>
        <span />
        <a href="#lieferadressen" className="mt-[5px] flex h-4 items-center gap-px pl-0.5 text-[13px]"><ArrowBoxIcon />Weitere Lieferadressen...</a>
      </div>
      <div className="flex flex-col gap-[5px]">
        <TextBlock title="Betreff:" value="Demo - Rechnung" h="h-[39px]" bold />
        <TextBlock title="Briefanrede:" value="Sehr geehrter Herr Mustermann," h="h-[22px]" />
        <TextBlock title="Einleitungstext:" value="wir berechnen gemäß Ihrer Bestellung wie folgt:" h="h-[22px]" />
        <TextBlock title="Kurzinformation:" h="h-[22px]" />
      </div>
    </div>
  );
}

type Row = { label: string; kind: "combo" | "text" | "pair"; value?: string; icon?: React.ReactNode; accent?: boolean; gray?: boolean; right?: boolean };

const rows: Row[] = [
  { label: "Belegtitel:", kind: "combo", value: "Rechnung", icon: <ListEditIcon />, accent: true },
  { label: "Belegnummer:", kind: "text", value: "RG00012", icon: <SearchIcon />, accent: true, gray: true },
  { label: "Belegdatum:", kind: "text", value: "10.01.2020", icon: <CalSmallIcon />, accent: true },
  { label: "Lieferdatum:", kind: "text", value: "10.01.2020", icon: <CalSmallIcon /> },
  { label: "Leistungszeitraum:", kind: "pair", value: "10.01.2020", icon: <CalSmallIcon /> },
  { label: "Bearbeiter:", kind: "combo", value: "Admin", icon: <UserLineIcon /> },
  { label: "Belegstatus:", kind: "combo", value: "Offen" },
  { label: "Beleggruppe:", kind: "combo", value: "Demo", icon: <ListEditIcon /> },
  { label: "Preisart:", kind: "combo", value: "(0) zzgl. MwSt." },
  { label: "Währung:", kind: "combo", value: "EUR (€)" },
  { label: "Preisgruppe:", kind: "combo", value: "1" },
  { label: "Rabattgruppe:", kind: "combo", value: "0", icon: <ListEditIcon /> },
  { label: "Rabatt / Aufschlag:", kind: "pair", value: "0,00%", right: true },
];

const numberRows: Row[] = [
  { label: "Eigene Auftrags-Nr.:", kind: "combo", value: "", icon: <SearchIcon /> },
  { label: "Eigene Projekt-Nr.:", kind: "combo", value: "", icon: <SearchIcon /> },
  { label: "Fremde Auftrags-Nr.:", kind: "text", value: "" },
];

const orderRows: Row[] = [
  { label: "Auftragsdatum:", kind: "text", value: "", icon: <CalSmallIcon /> },
  { label: "Auftragsart:", kind: "combo", value: "", icon: <ListEditIcon /> },
];

function FormRow({ row }: { row: Row }) {
  const tone = row.accent ? "font-bold text-[#1f72ab]" : "";
  return (
    <div className="flex h-[22px] items-center">
      <span className={`w-[138px] shrink-0 text-sm whitespace-nowrap ${tone}`}>{row.label}</span>
      <div className="flex w-[171px] gap-[3px]">
        {row.kind === "combo" && <Combo label={row.label} value={row.value ?? ""} bold={row.accent} blue={row.accent} />}
        {row.kind === "text" && <Field label={row.label} value={row.value} className={`${tone} ${row.gray ? "bg-[#efefef]" : "bg-white"}`} />}
        {row.kind === "pair" && (
          <>
            <Field label={`${row.label} von`} value={row.value} className={row.right ? "text-right" : ""} />
            <Field label={`${row.label} bis`} value={row.value} className={row.right ? "text-right" : ""} />
          </>
        )}
      </div>
      <span className="ml-[7px]">{row.icon && <IconButton label={`${row.label} bearbeiten`}>{row.icon}</IconButton>}</span>
    </div>
  );
}

function RightForm() {
  return (
    <div className="flex w-[334px] shrink-0 flex-col gap-[3px] pt-[11px]">
      {rows.map((r) => <FormRow key={r.label} row={r} />)}
      <div className="mt-[10px] flex flex-col gap-1">
        {numberRows.map((r) => <FormRow key={r.label} row={r} />)}
      </div>
      {orderRows.map((r) => <FormRow key={r.label} row={r} />)}
    </div>
  );
}

/* ---------- bottom bars ---------- */

function ToolButton({ icon, label, at }: { icon: React.ReactNode; label: string; at: number }) {
  return (
    <button type="button" className="flex min-w-0 flex-1 flex-col items-center text-[10px] leading-4">
      <span className="flex h-8 items-end justify-center">{icon}</span>
      <AccessKey text={label} at={at} />
    </button>
  );
}

function Toolbar() {
  return (
    <div className={`flex h-[63px] justify-between border-t border-[#8a8a8a] bg-[#d8d8d8] pt-[9px] ${SEGOE}`}>
      <div className="flex w-[756px]">
        <ToolButton icon={<EuroDocIcon star />} label="Neu" at={0} />
        <ToolButton icon={<DocIcon kind="edit" />} label="Bearbeiten" at={0} />
        <ToolButton icon={<DocIcon kind="add" />} label="Duplizieren" at={4} />
        <ToolButton icon={<DocIcon kind="next" />} label="Weiterführen" at={0} />
        <ToolButton icon={<DocIcon kind="delete" />} label="Löschen" at={0} />
        <ToolButton icon={<DocIcon kind="find" />} label="Suchen" at={1} />
        <ToolButton icon={<DocIcon kind="refresh" />} label="Aktualisieren" at={0} />
        <ToolButton icon={<FolderIcon />} label="Verwaltung" at={0} />
        <ToolButton icon={<TermineIcon />} label="Termine" at={0} />
        <ToolButton icon={<CalendarIcon refresh />} label="Aboserie" at={0} />
      </div>
      <div className="flex w-[227px]">
        <ToolButton icon={<PrinterIcon w={32} />} label="Drucken" at={0} />
        <ToolButton icon={<HelpIcon w={28} />} label="Hilfe" at={0} />
        <ToolButton icon={<CheckIcon w={28} />} label="Schließen" at={0} />
      </div>
    </div>
  );
}

const navPaths = {
  first: "M1 0v8M8 0v8L3 4z",
  prev: "M5 0v8L0 4z",
  next: "M0 0v8l5-4z",
  last: "M0 0v8l5-4zM7 0v8",
};

function NavGlyph({ d, dim }: { d: string; dim?: boolean }) {
  return (
    <Svg w={9} h={8}>
      <path d={d} fill={dim ? "#9db4d8" : "#1e3f83"} stroke={dim ? "none" : "#1e3f83"} strokeWidth=".8" />
    </Svg>
  );
}

function RecordNav() {
  return (
    <div className="flex h-5 items-center border-b border-[#5f86bd] bg-gradient-to-b from-[#d5e5fb] to-[#c3dafa] pl-[5px] text-[11px] text-[#1e3f83]">
      <span className="w-[35px]">Beleg</span>
      <button type="button" aria-label="Erster Datensatz" className="w-4"><NavGlyph d={navPaths.first} /></button>
      <button type="button" aria-label="Vorheriger Datensatz" className="w-[13px] pl-1"><NavGlyph d={navPaths.prev} dim /></button>
      <input aria-label="Datensatz" defaultValue="1 von 1" className="h-4 w-[50px] border border-[#a6c0e4] bg-[#edf4fd] px-px text-black" />
      <button type="button" aria-label="Nächster Datensatz" className="w-[25px] pl-2"><NavGlyph d={navPaths.next} /></button>
      <button type="button" aria-label="Letzter Datensatz" className="w-4"><NavGlyph d={navPaths.last} /></button>
      <button type="button" aria-label="Neuer Datensatz" className="w-[17px]">
        <Svg w={11} h={8}>
          <path d="M0 0v8l4-4z" fill="#1e3f83" />
          <path d="M7.500 0v8M4.500 4h6M5 1l5 6M10 1L5 7" stroke="#e8b42a" />
        </Svg>
      </button>
      <button type="button" className="flex h-[18px] w-[76px] items-center gap-1 border-x border-[#8aa9d6] bg-gradient-to-b from-[#fdcf94] via-[#f9b04c] to-[#fdd68a] pl-2">
        <Svg w={13} h={12}>
          <path d="M0 0h13L8 6v6l-3-2V6z" fill="#555" />
          <path d="M3 1h5L6.500 5z" fill="#ddd" />
        </Svg>
        Gefiltert
      </button>
      <input aria-label="Suchen" defaultValue="Suchen" className="ml-1.5 h-4 w-[70px] border border-[#a6c0e4] bg-[#edf4fd] px-px text-black" />
    </div>
  );
}

function StatusBar() {
  return (
    <footer className="flex h-[21px] items-center border-b border-[#4a6ea5] bg-gradient-to-b from-[#d7e6fb] via-[#b5d0f6] to-[#cfe1fb] px-2 text-[11px] text-[#1e3f83]">
      <span className="flex-1">Formularansicht</span>
      <span className="h-5 w-px bg-[#8fb0df]" />
      <div className="flex flex-1 items-center justify-end">
        <span className="mr-3.5">Num</span>
        <AccessIcon />
        <span className="ml-1">Unterstützt von Microsoft Office Access</span>
        <span className="ml-2.5">
          <Svg w={10} h={10}>
            <path d="M8 1h2v2H8zM8 4.500h2v2H8zM8 8h2v2H8zM4.500 4.500h2v2h-2zM4.500 8h2v2h-2zM1 8h2v2H1z" fill="#5f83b8" />
          </Svg>
        </span>
      </div>
    </footer>
  );
}

/* ---------- print dialog ---------- */

const forms = ["Rechnung", "Aufmaßprotokoll", "Inhaltsverzeichnis - Rechnung", "SEPA-Zahlschein", "Notiz"];
const templates = ["<Standard>", "Artikel", "Ausland", "Bild", "brutto", "Chargennummern", "einfach", "Europa", "GiroCode", "Kleinunternehmer"].map((t, i) =>
  i === 0 ? t : `Rechnung_${t} (DE)`,
);

function ListItems({ items, selected, label }: { items: string[]; selected: number; label: string }) {
  return (
    <ul role="listbox" aria-label={label} className="min-w-0 flex-1 overflow-hidden text-sm leading-[18px]">
      {items.map((t, i) => (
        <li key={t} role="option" aria-selected={i === selected} className={`h-[19px] px-[3px] whitespace-nowrap ${i === selected ? "bg-black text-white" : ""}`}>
          {t}
        </li>
      ))}
    </ul>
  );
}

function Check({ label, checked, disabled, className = "" }: { label: string; checked?: boolean; disabled?: boolean; className?: string }) {
  return (
    <label className={`flex items-center whitespace-nowrap ${disabled ? "text-[#a0a0a0]" : ""} ${className}`}>
      {label}
      <span className="relative block size-[13px] shrink-0">
        <input
          type="checkbox"
          defaultChecked={checked}
          disabled={disabled}
          className={`block size-[13px] appearance-none border ${disabled ? "border-[#c0c0c0] bg-[#f6f6f6]" : "border-[#8f8f8f] bg-gradient-to-br from-[#d5d5d5] to-[#f5f5f5] shadow-[inset_0_0_0_1px_#f4f4f4]"}`}
        />
        {checked && (
          <svg viewBox="0 0 13 13" className="pointer-events-none absolute inset-0 size-[13px]" aria-hidden="true">
            <path d="M3 6l2.500 4L10 2.500" stroke="#3a4f96" strokeWidth="2" fill="none" />
          </svg>
        )}
      </span>
    </label>
  );
}

function Radio({ label, checked }: { label: string; checked?: boolean }) {
  return (
    <label className="flex items-center gap-[5px]">
      <input
        type="radio"
        name="druckbereich"
        defaultChecked={checked}
        className="size-3 appearance-none rounded-full border border-[#8a8f94] bg-[radial-gradient(circle,#d8d8d8,#f4f4f4)] checked:bg-[radial-gradient(circle,#1d4f78_0_3px,#eef2f5_4px)]"
      />
      {label}
    </label>
  );
}

function DialogRow({ label, value }: { label: string; value: string }) {
  return (
    <div className="mb-1 flex h-[22px] items-center">
      <span className="w-[114px] shrink-0 pl-0.5">{label}</span>
      <Combo label={label} value={value} />
    </div>
  );
}

const dialogButton = "flex items-center justify-center gap-0.5 rounded-[3px] border border-[#777] bg-gradient-to-b from-[#f2f2f2] via-[#e4e4e4] to-[#cdcdcd] shadow-[inset_0_0_0_1px_#fafafa]";
const accentLabel = "pl-0.5 font-bold leading-5 text-[#1f72ab]";

function PrintDialog() {
  return (
    <div className="pointer-events-none absolute inset-x-0 top-[94px] flex justify-center">
      <div role="dialog" aria-label="Drucken" className="pointer-events-auto w-[621px] rounded-[7px] border border-[#2e3c52] bg-gradient-to-r from-[#a5b6d3] via-[#a9bad6] to-[#9cb4d8] px-[5px] pb-[6px] shadow-[inset_0_0_0_1px_#c9d6ea,2px_3px_10px_2px_rgba(0,0,0,0.55)]">
        <div className="flex h-7 items-center justify-between">
          <div className={`flex items-center gap-1 text-xs ${SEGOE}`}>
            <PrinterIcon />
            Drucken
          </div>
          <button type="button" aria-label="Dialog schließen" className="flex h-[19px] w-[47px] items-center justify-center self-start rounded-b-[4px] border border-t-0 border-[#66758f]">
            <CloseGlyph />
          </button>
        </div>
        <div className="border border-[#4b5b75] bg-white text-sm">
          <div role="tablist" className="mr-[7px] flex h-[25px] text-sm">
            <button type="button" role="tab" aria-selected="true" className="w-[153px] border-r border-[#7a7a7a] bg-white pb-1 font-bold">
              Druckoptionen
            </button>
            <button type="button" role="tab" aria-selected="false" className={`w-[149px] border-t ${inactiveTab}`}>Erweiterte Optionen</button>
            <button type="button" role="tab" aria-selected="false" className={`w-[150px] border-t ${inactiveTab}`}>Etikettendruck</button>
            <button type="button" role="tab" aria-selected="false" className={`flex-1 border-t ${inactiveTab}`}>E-Rechnung</button>
          </div>
          <div className="mr-1 flex h-[470px] gap-9 border-r border-[#8a8a8a] pt-3 pl-[18px]">
            <div className="w-[247px] shrink-0">
              <h3 className={`mb-1 ${accentLabel}`}>Formulare:</h3>
              <div className="mb-[7px] flex h-[171px] border border-[#6f6f6f]">
                <ListItems items={forms} selected={0} label="Formulare" />
              </div>
              <div className="mb-[5px] flex items-center justify-between">
                <h3 className={accentLabel}>Formatvorlagen:</h3>
                <Check label="Favoriten" className="gap-[15px]" />
              </div>
              <div className="flex h-[190px] border border-[#6f6f6f]">
                <ListItems items={templates} selected={6} label="Formatvorlagen" />
                <div className="flex w-[17px] flex-col items-center bg-[#efefef] pt-[7px] pb-[7px] text-[#444]">
                  <Caret className="rotate-180" />
                  <span className="mt-[7px] h-4 w-[15px] rounded-[1px] border border-[#9a9a9a] bg-gradient-to-r from-[#f3f3f3] to-[#cfcfcf]" />
                  <Caret className="mt-auto" />
                </div>
              </div>
              <button type="button" className={`mt-[3px] ml-px h-7 w-[244px] ${dialogButton}`}>
                <FormEditIcon />
                Formulareditor...
              </button>
            </div>
            <div className="min-w-0 flex-1">
              <h3 className={`mb-1 ${accentLabel}`}>Windows Standarddrucker:</h3>
              <div className="mb-[11px] flex items-center gap-2">
                <div className="flex h-[22px] w-[266px] items-center gap-0.5 border border-[#c9c9c9] bg-[#ececec] pl-0.5 font-bold text-[#1f72ab]">
                  <PrinterIcon />
                  WF-3720 Series(Netzwerk)
                </div>
                <IconButton label="Druckerinfo"><PrinterIcon badge="info" /></IconButton>
              </div>
              <h3 className={`mb-[5px] ${accentLabel}`}>Drucker auswählen:</h3>
              <div className="mb-1 flex items-center gap-2">
                <div className="flex w-[266px]"><Combo label="Drucker" value="WF-3720 Series(Netzwerk)" bold /></div>
                <IconButton label="Druckerinfo Auswahl"><PrinterIcon badge="info" /></IconButton>
              </div>
              <div className="w-[266px]">
                <DialogRow label="Papiergröße:" value="A4 (210 mm x 297 mm)" />
                <DialogRow label="Papierschacht:" value="Papierkassette" />
                <DialogRow label="Ausrichtung:" value="Hochformat" />
                <DialogRow label="Duplex:" value="Einfach" />
                <fieldset className="mt-[10px] mb-[17px] h-[81px] rounded-[4px] border border-[#d3d3d3] pr-1.5 pl-2">
                  <legend className="ml-px px-1 leading-[18px] font-bold text-[#1f72ab]">Druckbereich</legend>
                  <div className="mt-2 flex h-[22px] items-center"><Radio label="Alle Seiten" checked /></div>
                  <div className="mt-1 flex h-[22px] items-center">
                    <Radio label="Seiten" />
                    <span className="ml-[18px] w-[31px]">von:</span>
                    <input aria-label="von Seite" className="h-[22px] w-[46px] border border-[#9a9a9a]" />
                    <span className="ml-[26px] w-[26px]">bis:</span>
                    <input aria-label="bis Seite" className="h-[22px] w-[47px] border border-[#9a9a9a]" />
                  </div>
                </fieldset>
                <DialogRow label="Kopien:" value="2" />
                <DialogRow label="Sortieren:" value="Ja" />
                <DialogRow label="Druckqualität:" value="Hoch" />
                <div className="mt-[10px] flex justify-between pr-px pl-0.5 leading-5">
                  <Check label="Hintergrund" checked className="gap-1.5" />
                  <Check label="Briefpapier" checked className="gap-1.5" />
                  <Check label="Logo" checked className="gap-1.5" />
                </div>
                <Check label="Anhänge des Belegs in E-Mail einfügen" disabled className="mt-1.5 justify-between pr-px pl-0.5" />
              </div>
            </div>
          </div>
          <div className="flex h-10 items-center border-t border-[#7a7a7a] bg-[#d8d8d8]">
            <div className="flex flex-1 justify-between pr-[22px] pl-7">
              <button type="button" className="flex items-center gap-0.5"><MailIcon />E-Mail</button>
              <button type="button" className="flex items-center gap-1"><PhoneIcon />Fax</button>
              <button type="button" className="flex items-center gap-0.5"><PdfIcon />PDF</button>
            </div>
            <div className="flex gap-0.5 pr-1">
              <button type="button" className={`h-8 w-[111px] font-bold ${dialogButton}`}><PreviewIcon /><AccessKey text="Vorschau" at={0} /></button>
              <button type="button" className={`h-8 w-[111px] font-bold ${dialogButton}`}><PrinterIcon badge="check" /><AccessKey text="Drucken..." at={0} /></button>
              <button type="button" className={`h-8 w-[112px] ${dialogButton}`}><CheckIcon w={16} /><AccessKey text="Schließen" at={0} /></button>
            </div>
          </div>
        </div>
      </div>
    </div>
  );
}

export default function App() {
  return (
    <div className="relative min-h-screen bg-[#1d4f7c] font-['Lato','Liberation_Sans',sans-serif] text-black">
      <div className="flex min-h-screen flex-col rounded-t-[7px] border border-t-2 border-[#33425c] bg-[linear-gradient(100deg,#a3b3d2,#b6c3da_30%,#a5b4d0_50%,#b3c0d8_75%,#a0b1d0)] px-[6px] pb-[5px] shadow-[inset_1px_1px_0_#d5deec,inset_-1px_0_0_#d5deec]">
        <div className={SEGOE}>
          <TitleBar />
        </div>
        <div className="flex flex-1 flex-col border border-[#44608c] bg-white">
          <div className={SEGOE}>
            <MenuBar />
            <div className="bg-[#a9c8f0] pb-px">
              <Ribbon />
            </div>
            <DocumentTabs />
          </div>
          <RecordHeader />
          <FormTabs />
          <main className="mr-0.5 flex flex-1 justify-between gap-[166px] border-r border-[#8a8a8a] pr-[20px] pb-2.5 pl-[18px]">
            <LeftForm />
            <RightForm />
          </main>
          <Toolbar />
          <div className={SEGOE}>
            <RecordNav />
            <StatusBar />
          </div>
        </div>
      </div>
      <button type="button" aria-label="Office-Menü" className="absolute top-[7px] left-[11px]">
        <OfficeOrb />
      </button>
      <PrintDialog />
    </div>
  );
}
